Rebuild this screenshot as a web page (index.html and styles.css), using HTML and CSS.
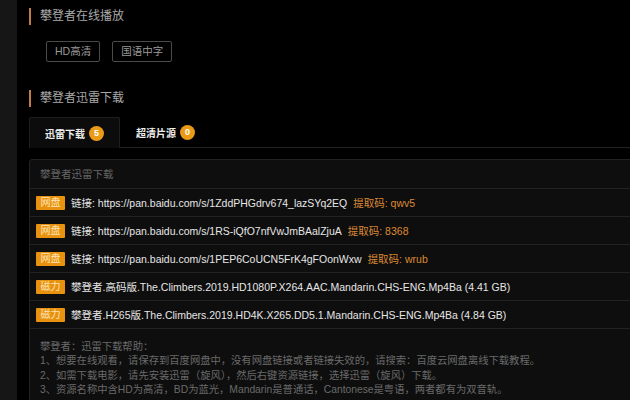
FILE: index.html
```html
<!DOCTYPE html>
<html lang="zh">
<head>
<meta charset="utf-8">
<title>攀登者</title>
<link rel="stylesheet" href="styles.css">
</head>
<body>
<div class="page">
  <div class="side"></div>
  <div class="main">
    <h3 class="heading">攀登者在线播放</h3>
    <div class="tags">
      <span class="tag">HD高清</span>
      <span class="tag">国语中字</span>
    </div>
    <h3 class="heading heading-2">攀登者迅雷下载</h3>
    <div class="tabs">
      <div class="tab active">迅雷下载<span class="count">5</span></div>
      <div class="tab">超清片源<span class="count">0</span></div>
    </div>
    <div class="box">
      <div class="box-head">攀登者迅雷下载</div>
      <div class="row"><span class="label">网盘</span><span class="link">链接: https://pan.baidu.com/s/1ZddPHGdrv674_lazSYq2EQ</span><span class="code">提取码: qwv5</span></div>
      <div class="row"><span class="label">网盘</span><span class="link">链接: https://pan.baidu.com/s/1RS-iQfO7nfVwJmBAalZjuA</span><span class="code">提取码: 8368</span></div>
      <div class="row"><span class="label">网盘</span><span class="link">链接: https://pan.baidu.com/s/1PEP6CoUCN5FrK4gFOonWxw</span><span class="code">提取码: wrub</span></div>
      <div class="row"><span class="label">磁力</span><span class="link">攀登者.高码版.The.Climbers.2019.HD1080P.X264.AAC.Mandarin.CHS-ENG.Mp4Ba (4.41 GB)</span></div>
      <div class="row"><span class="label">磁力</span><span class="link">攀登者.H265版.The.Climbers.2019.HD4K.X265.DD5.1.Mandarin.CHS-ENG.Mp4Ba (4.84 GB)</span></div>
      <div class="help">
        <p>攀登者：迅雷下载帮助：</p>
        <p>1、想要在线观看，请保存到百度网盘中，没有网盘链接或者链接失效的，请搜索：百度云网盘离线下载教程。</p>
        <p>2、如需下载电影，请先安装迅雷（旋风），然后右键资源链接，选择迅雷（旋风）下载。</p>
        <p>3、资源名称中含HD为高清，BD为蓝光，Mandarin是普通话，Cantonese是粤语，两者都有为双音轨。</p>
      </div>
    </div>
  </div>
</div>
</body>
</html>
```

FILE: styles.css
```css
html, body {
  margin: 0;
  padding: 0;
  background: #000;
  overflow: hidden;
}
body {
  font-family: "Liberation Sans", "Noto Sans CJK SC", Arial, sans-serif;
  color: #ddd;
}
.page {
  display: flex;
  width: 700px;
  height: 400px;
}
.side {
  width: 17px;
  flex: none;
  background: #161616;
}
.main {
  flex: none;
  width: 660px;
  padding-left: 12px;
  padding-top: 8px;
}
.heading {
  margin: 0;
  font-size: 12px;
  font-weight: normal;
  line-height: 17px;
  color: #a8a8a8;
  border-left: 2px solid #c27a48;
  padding-left: 9px;
}
.heading-2 {
  margin-top: 1px;
}
.tags {
  display: flex;
  gap: 12px;
  padding: 16px 0 27px 17px;
}
.tag {
  display: inline-block;
  height: 19px;
  line-height: 19px;
  padding: 0 8px;
  border: 1px solid #4a4a4a;
  border-radius: 2px;
  font-size: 10.5px;
  color: #9a9a9a;
}
.tabs {
  display: flex;
  margin-top: 10px;
  border-bottom: 1px solid #222;
  height: 30px;
}
.tab {
  display: flex;
  align-items: center;
  gap: 4px;
  padding: 0 15px 0 15px;
  font-size: 10px;
  font-weight: bold;
  color: #eee;
  border: 1px solid transparent;
  border-bottom: none;
  margin-bottom: -1px;
  height: 30px;
  box-sizing: border-box;
  border-radius: 2px 2px 0 0;
}
.tab.active {
  background: #0c0c0c;
  border-color: #1f1f1f;
  height: 31px;
}
.tab + .tab {
  padding-left: 15px;
}
.count {
  display: inline-block;
  width: 15px;
  height: 15px;
  line-height: 15px;
  border-radius: 50%;
  background: #eb9a16;
  color: #fff;
  text-align: center;
  font-size: 9px;
  font-weight: bold;
}
.box {
  margin-top: 11px;
  background: #0e0e0e;
  border: 1px solid #222;
  border-radius: 3px;
}
.box-head {
  height: 28px;
  line-height: 28px;
  padding-left: 10px;
  font-size: 10.5px;
  color: #666;
  border-bottom: 1px solid #222;
}
.row {
  display: flex;
  align-items: center;
  height: 27px;
  border-bottom: 1px solid #222;
  padding-left: 6px;
  font-size: 10.5px;
}
.label {
  display: inline-block;
  width: 29px;
  height: 14px;
  line-height: 14px;
  text-align: center;
  background: #e8920f;
  color: #fde3b6;
  font-size: 10px;
  border-radius: 1px;
  margin-right: 6px;
}
.link {
  color: #e6e6e6;
}
.code {
  color: #dc8a34;
  margin-left: 6px;
}
.help {
  padding: 11px 10px 10px;
  font-size: 10.3px;
  line-height: 14.4px;
  color: #6a6a6a;
}
.help p {
  margin: 0;
}
```
